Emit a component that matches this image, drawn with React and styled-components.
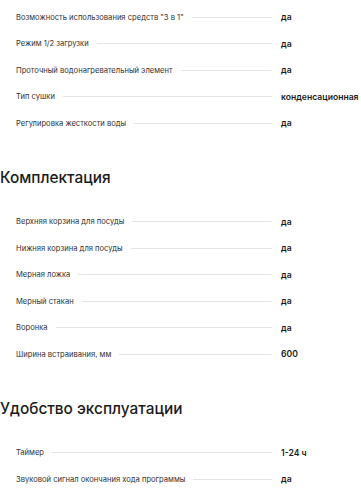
import styled, { createGlobalStyle } from "styled-components"

const GlobalStyle = createGlobalStyle`
  body {
    margin: 0;
    background: #fff;
    font-family: Inter, "Noto Sans", sans-serif;
    overflow: hidden;
  }
`

const sections = [
  {
    title: null,
    rows: [
      ["Возможность использования средств \"3 в 1\"", "да"],
      ["Режим 1/2 загрузки", "да"],
      ["Проточный водонагревательный элемент", "да"],
      ["Тип сушки", "конденсационная"],
      ["Регулировка жесткости воды", "да"],
    ],
  },
  {
    title: "Комплектация",
    rows: [
      ["Верхняя корзина для посуды", "да"],
      ["Нижняя корзина для посуды", "да"],
      ["Мерная ложка", "да"],
      ["Мерный стакан", "да"],
      ["Воронка", "да"],
      ["Ширина встраивания, мм", "600"],
    ],
  },
  {
    title: "Удобство эксплуатации",
    rows: [
      ["Таймер", "1-24 ч"],
      ["Звуковой сигнал окончания хода программы", "да"],
    ],
  },
]

const App = () => {
  return (
    <Page>
      <GlobalStyle />
      {sections.map((section, i) => (
        <Section key={i}>
          {section.title && <Heading>{section.title}</Heading>}
          <List>
            {section.rows.map(([label, value]) => (
              <Row key={label}>
                <Label>{label}</Label>
                <Line />
                <Value>{value}</Value>
              </Row>
            ))}
          </List>
        </Section>
      ))}
    </Page>
  )
}

export default App

const Page = styled.div`
  width: 361px;
  padding-top: 3.75px;
`

const Section = styled.section`
  & + & {
    margin-top: 29.5px;
  }
`

const Heading = styled.h2`
  margin: 0 0 18.5px;
  font-size: 15.4px;
  line-height: 24px;
  font-weight: 500;
  color: #1b1b1b;
`

const List = styled.div`
  display: flex;
  flex-direction: column;
`

const Row = styled.div`
  display: flex;
  align-items: center;
  height: 26.5px;
  padding-left: 16px;
`

const Label = styled.span`
  font-size: 7.6px;
  color: #333;
  white-space: nowrap;
`

const Line = styled.div`
  flex: 1;
  height: 1px;
  background: #e4e4e4;
  margin: 0 9px 0 8px;
`

const Value = styled.span`
  width: 80px;
  flex-shrink: 0;
  font-size: 8.6px;
  font-weight: 600;
  color: #1b1b1b;
  white-space: nowrap;
`
